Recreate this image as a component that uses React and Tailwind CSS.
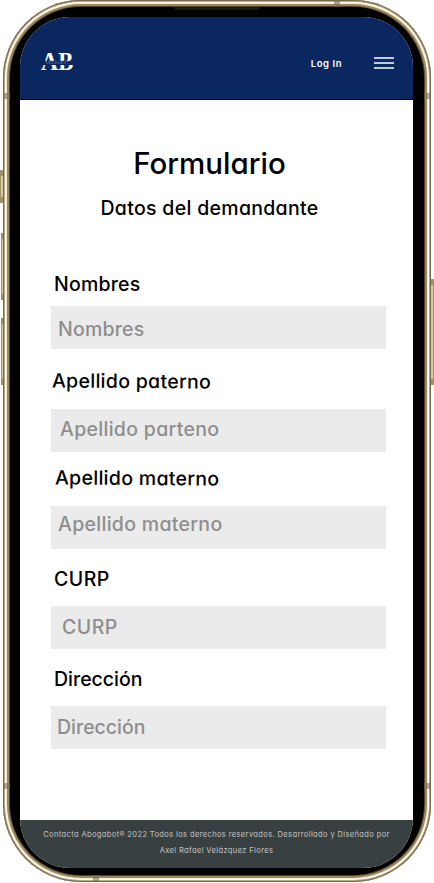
const FIELDS = [
  { label: 'Nombres', hint: 'Nombres', labelCls: 'pt-[52px] pb-[10px] pl-[3px] tracking-[0.2px]', hintCls: 'pt-[11px] pl-[7px] tracking-[0.2px]' },
  { label: 'Apellido paterno', hint: 'Apellido parteno', labelCls: 'pt-[20px] pb-[16px] pl-[1px] tracking-[0.3px] rotate-[0.4deg]', hintCls: 'pt-[8px] pl-[9px] tracking-[0.3px]' },
  { label: 'Apellido materno', hint: 'Apellido materno', labelCls: 'pt-[14px] pb-[16px] pl-[4px] tracking-[0.3px] rotate-[0.4deg]', hintCls: 'pt-[6px] pl-[7px] tracking-[0.3px]' },
  { label: 'CURP', hint: 'CURP', labelCls: 'pt-[18px] pb-[15px] pl-[3px] tracking-[0.5px]', hintCls: 'pt-[9px] pl-[11px] tracking-[0.5px]' },
  { label: 'Dirección', hint: 'Dirección', labelCls: 'pt-[18px] pb-[15px] pl-[3px] tracking-[0px]', hintCls: 'pt-[9px] pl-[6px] tracking-[0px]' },
]

function Logo() {
  return (
    <svg width="33" height="19" viewBox="0 0 33 19" className="block overflow-visible">
      <g fill="#ffffff" fontFamily="'Liberation Serif', serif" fontWeight="700" fontSize="25.5">
        <text x="0" y="17" textLength="17" lengthAdjust="spacingAndGlyphs">A</text>
        <text x="17.2" y="17" textLength="15" lengthAdjust="spacingAndGlyphs">B</text>
      </g>
      <rect x="0" y="7.8" width="33" height="4.2" fill="#0b2760" />
      <text x="4.5" y="11.1" fill="#8c9bbd" fontFamily="Inter, sans-serif" fontSize="3" textLength="23">ABOGABOT</text>
    </svg>
  )
}

function SideButton({ className }) {
  return <div className={`border-x border-y-[6px] border-x-[#a2946c] border-y-[#a08e66] bg-[#d6c9a8] ${className}`} />
}

function AntennaBand({ className }) {
  return <div className={`absolute bg-[#7f6b55]/60 ${className}`} />
}

export default function App() {
  return (
    <div className="flex h-[883px] w-[434px] overflow-hidden bg-white font-['Inter',sans-serif] [font-feature-settings:'cv11'_1]">
      <div className="-mr-[2px] flex w-[5px] shrink-0 flex-col items-end pt-[170px]">
        <SideButton className="h-[33px] w-[5px]" />
        <SideButton className="mt-[30px] h-[67px] w-[4px]" />
        <SideButton className="mt-[18px] h-[67px] w-[4px]" />
      </div>

      <div className="relative z-10 h-[882px] w-[428px] shrink-0 rounded-[78px] bg-black pt-[17px] pl-[17px] shadow-[inset_0_0_0_1px_#786a4a,inset_0_0_0_2px_#b5a988,inset_0_0_0_3px_#ffffff,inset_0_0_0_4px_#f3ead2,inset_0_0_0_6px_#9c875c,inset_0_0_0_7px_#4f4228]">
        <AntennaBand className="top-[93px] left-0 h-[6px] w-[7px]" />
        <AntennaBand className="top-[93px] right-0 h-[6px] w-[7px]" />
        <AntennaBand className="top-[783px] left-0 h-[6px] w-[7px]" />
        <AntennaBand className="top-[783px] right-0 h-[6px] w-[7px]" />
        <AntennaBand className="top-0 left-[331px] h-[7px] w-[6px]" />
        <AntennaBand className="bottom-0 left-[90px] h-[7px] w-[6px]" />
        <div className="absolute top-[7px] left-[171px] h-[3px] w-[86px] rounded-b-sm bg-[#161a18]" />

        <div className="flex h-[851px] w-[393px] flex-col overflow-hidden rounded-[50px] bg-white">
          <header className="flex h-[83px] shrink-0 items-center justify-between border-b border-black bg-[#0b2760] pt-[9px] pr-[19px] pl-[21px]">
            <Logo />
            <div className="flex items-center gap-[32px]">
              <span className="pt-[2px] text-[9.5px] leading-3 font-semibold tracking-[0.55px] text-white">Log In</span>
              <div className="flex w-5 flex-col gap-[3px]">
                <span className="h-[2px] bg-[#c3c9d8]" />
                <span className="h-[2px] bg-[#c3c9d8]" />
                <span className="h-[2px] bg-[#c3c9d8]" />
              </div>
            </div>
          </header>

          <main className="flex flex-1 flex-col pr-[27px] pl-[31px] text-[19.5px] leading-6 font-medium text-black">
            <div className="flex flex-col items-center gap-[15px] pt-[45px] pr-[18px]">
              <h1 className="text-[29.5px] leading-9 font-medium">Formulario</h1>
              <h2 className="font-medium tracking-[0.3px]">Datos del demandante</h2>
            </div>
            <form className="flex flex-col">
              {FIELDS.map((f) => (
                <label key={f.label} className="flex flex-col items-start">
                  <span className={f.labelCls}>{f.label}</span>
                  <span className={`h-[43px] w-[335px] bg-[#ebebeb] text-[#8e8e8e] ${f.hintCls}`}>{f.hint}</span>
                </label>
              ))}
            </form>
          </main>

          <footer className="flex h-[48px] shrink-0 flex-col items-center bg-[#394041] pt-[7px] text-[7.5px] leading-4 tracking-[0.38px] text-[#c4c6c6]">
            <p className="whitespace-nowrap">Contacta Abogabot® 2022 Todos los derechos reservados. Desarrollado y Diseñado por</p>
            <p>Axel Rafael Velázquez Flores</p>
          </footer>
        </div>
      </div>

      <div className="-ml-[2px] flex w-[5px] shrink-0 flex-col pt-[279px]">
        <SideButton className="h-[106px] w-[5px]" />
      </div>
    </div>
  )
}
